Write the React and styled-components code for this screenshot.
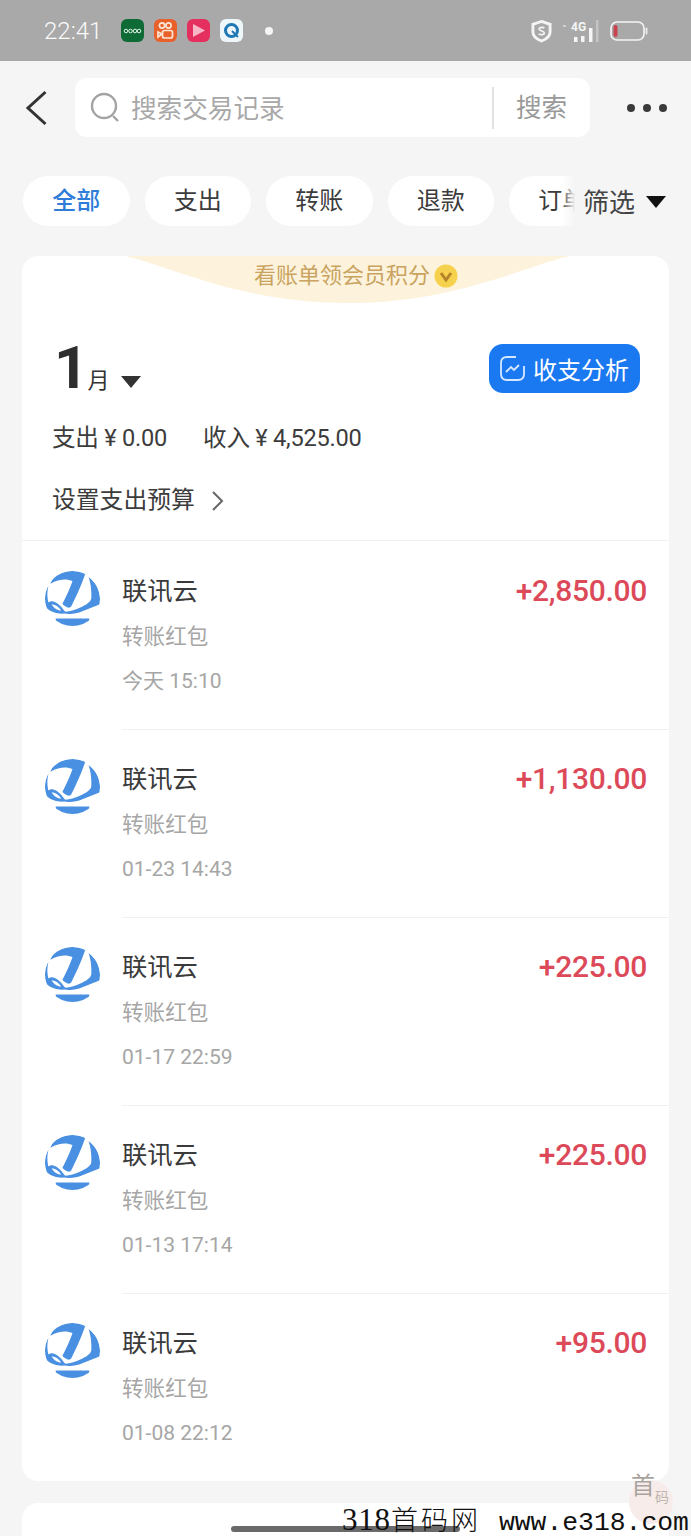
import React from 'react'
import styled, { createGlobalStyle } from 'styled-components'

const GlobalStyle = createGlobalStyle`
  html, body { margin: 0; padding: 0; background: #f5f5f5; }
  body { font-family: Roboto, "Noto Sans CJK SC", sans-serif; }
  * { box-sizing: border-box; }
`

const cjk = `Roboto, "Noto Sans CJK SC", sans-serif`

const Page = styled.div`
  position: relative;
  width: 691px;
  height: 1536px;
  overflow: hidden;
  background: #f5f5f5;
  font-family: ${cjk};
`

const StatusBar = styled.div`
  height: 61px;
  background: #a9a9a9;
  display: flex;
  align-items: center;
  padding: 0 43px 0 44px;
`

const Clock = styled.span`
  font-size: 24px;
  font-weight: 300;
  color: #fafafa;
  width: 77px;
`

const AppIcons = styled.div`
  display: flex;
  align-items: center;
  gap: 10px;
`

const AppIcon = styled.span`
  width: 23px;
  height: 23px;
  border-radius: 6px;
  background: ${p => p.$bg};
  display: flex;
  align-items: center;
  justify-content: center;
  flex: none;
`

const NotifyDot = styled.span`
  width: 8px;
  height: 8px;
  border-radius: 50%;
  background: #f5f5f5;
  margin-left: 22px;
`

const StatusRight = styled.div`
  margin-left: auto;
  display: flex;
  align-items: center;
  gap: 11px;
`

const TopRow = styled.div`
  height: 76px;
  margin-top: 17px;
  display: flex;
  align-items: flex-start;
  padding-left: 25px;
`

const BackBtn = styled.div`
  width: 50px;
  height: 59px;
  display: flex;
  align-items: center;
`

const SearchBox = styled.div`
  width: 515px;
  height: 59px;
  background: #fff;
  border-radius: 12px;
  display: flex;
  align-items: center;
  padding-left: 15px;
`

const Placeholder = styled.span`
  font-size: 25.6px;
  color: #a8a8a8;
  margin-left: 11px;
  padding-bottom: 2px;
  flex: 1;
`

const SearchBtn = styled.span`
  width: 98px;
  height: 42px;
  border-left: 2px solid #e2e2e2;
  font-size: 25.6px;
  line-height: 42px;
  color: #999;
  padding-left: 22px;
`

const MoreDots = styled.div`
  display: flex;
  gap: 8px;
  margin-left: 37px;
  height: 59px;
  align-items: center;
`

const Dot = styled.span`
  width: 8px;
  height: 8px;
  border-radius: 50%;
  background: #3a3a3a;
`

const FilterWrap = styled.div`
  position: relative;
  margin-top: 22px;
  height: 50px;
  overflow: hidden;
`

const Pills = styled.div`
  display: flex;
  gap: 15px;
  padding-left: 23px;
  width: 800px;
`

const Pill = styled.span`
  width: 106.5px;
  height: 50px;
  border-radius: 25px;
  background: #fff;
  text-align: center;
  line-height: 51px;
  font-size: 24px;
  color: ${p => (p.$active ? '#2f7dd8' : '#3c3c3c')};
  font-weight: ${p => (p.$active ? 500 : 400)};
`

const FilterOverlay = styled.div`
  position: absolute;
  top: 0;
  right: 0;
  width: 130px;
  height: 50px;
  background: linear-gradient(to right, rgba(245, 245, 245, 0), #f5f5f5 14px);
  display: flex;
  align-items: center;
  padding-left: 22px;
  font-size: 26px;
  color: #444;
`

const FilterLabel = styled.span`
  padding-bottom: 2px;
`

const Caret = styled.span`
  width: 0;
  height: 0;
  border-left: ${p => p.$w}px solid transparent;
  border-right: ${p => p.$w}px solid transparent;
  border-top: ${p => p.$h}px solid ${p => p.$color};
  margin-left: ${p => p.$ml}px;
  flex: none;
`

const FilterCaret = styled(Caret)`
  margin-top: 2px;
`

const Card = styled.div`
  margin: 30px 22px 0;
  background: #fff;
  border-radius: 16px;
`

const Banner = styled.div`
  position: relative;
  width: 445px;
  height: 47px;
  margin-left: 103px;
  display: flex;
  justify-content: center;
  padding: 3px 0 0 17px;
  font-size: 22px;
  line-height: 34px;
  color: #c9a35f;
  gap: 4px;
`

const BannerWave = styled.svg`
  position: absolute;
  inset: 0;
`

const BannerText = styled.span`
  position: relative;
`

const BannerBadge = styled.svg`
  position: relative;
  margin-top: 5px;
`

const Summary = styled.div`
  padding: 41px 29px 24px 30px;
  border-bottom: 1px solid #f0f0f0;
`

const MonthRow = styled.div`
  height: 49px;
  display: flex;
  align-items: center;
  justify-content: space-between;
`

const Month = styled.div`
  display: flex;
  align-items: baseline;
  color: #333;
  padding-left: 1px;
`

const MonthNum = styled.span`
  font-size: 60px;
  font-weight: 700;
  line-height: 49px;
  color: #2e2e2e;
  margin-left: 1px;
  letter-spacing: -4px;
`

const MonthUnit = styled.span`
  font-size: 22px;
  margin-left: 3px;
  margin-right: 12px;
`

const AnalysisBtn = styled.div`
  width: 151px;
  height: 49px;
  background: #1a78f0;
  border-radius: 14px;
  display: flex;
  align-items: center;
  padding-left: 10px;
  gap: 7px;
  font-size: 24px;
  color: #fff;
`

const Totals = styled.div`
  margin-top: 30px;
  display: flex;
  gap: 36px;
  font-size: 23.6px;
  line-height: 30px;
  color: #3c3c3c;
`

const Money = styled.span`
  letter-spacing: -0.25px;
`

const BudgetRow = styled.div`
  margin-top: 32px;
  display: flex;
  align-items: center;
  gap: 16px;
  font-size: 23.8px;
  line-height: 31px;
  color: #3c3c3c;
`

const RowList = styled.div`
  padding-top: 1px;
`

const Row = styled.div`
  display: grid;
  grid-template-columns: 100px 1fr;
`

const Avatar = styled.svg`
  margin: 29px 0 0 23px;
`

const RowBody = styled.div`
  padding: 33px 22px 33px 0;
  border-bottom: ${p => (p.$last ? 'none' : '1px solid #f0f0f0')};
`

const RowTop = styled.div`
  display: flex;
  justify-content: space-between;
  align-items: flex-start;
  height: 34px;
  line-height: 34px;
`

const Name = styled.span`
  font-size: 25.3px;
  color: #3a3a3a;
`

const Amount = styled.span`
  font-size: 30px;
  font-weight: 500;
  line-height: 32px;
  color: #dc4a59;
  letter-spacing: -0.3px;
`

const SubText = styled.div`
  margin-top: ${p => p.$mt}px;
  font-size: 21.6px;
  line-height: 30px;
  color: #a6a6a6;
`

const TimeText = styled(SubText)`
  font-size: 21px;
`

const NextCard = styled(Card)`
  margin-top: 22px;
  height: 200px;
`

const HomeBar = styled.div`
  position: absolute;
  left: 231px;
  top: 1526px;
  width: 229px;
  height: 6px;
  border-radius: 3px;
  background: #6a6a6a;
`

const Watermark = styled.div`
  position: absolute;
  left: 342px;
  top: 1504px;
  display: flex;
  align-items: baseline;
  color: #111;
  line-height: 30px;
  white-space: nowrap;
`

const MarkDigits = styled.span`
  font-family: "Liberation Serif", serif;
  font-size: 31px;
  letter-spacing: 0.8px;
`

const MarkCjk = styled.span`
  font-family: "Noto Sans CJK SC", sans-serif;
  font-weight: 300;
  font-size: 27px;
  letter-spacing: 3px;
`

const MarkUrl = styled.span`
  font-family: "Liberation Mono", monospace;
  font-size: 26.4px;
  margin-left: 18px;
`

const Seal = styled.svg`
  position: absolute;
  left: 627px;
  top: 1466px;
`

function LinkLogo() {
  return (
    <Avatar width="55" height="55" viewBox="8 6 164 164">
      <defs>
        <clipPath id="logoClip">
          <circle cx="90" cy="88" r="82" />
        </clipPath>
      </defs>
      <g clipPath="url(#logoClip)" fill="#4a90e2">
        <path d="M30 30 C50 5 100 0 128 14 C118 45 100 85 86 112 C80 120 66 112 60 104 C70 85 84 55 90 36 C72 28 50 30 24 44 Z" />
        <path d="M138 24 C165 45 175 75 172 105 L110 130 C90 136 70 136 60 128 C80 128 100 122 120 112 C134 104 144 98 146 88 C147 65 145 45 138 24 Z" />
        <path d="M18 50 C6 70 4 95 12 115 C25 130 50 136 72 132 C60 118 50 100 30 96 C24 96 20 98 18 100 C14 85 14 68 18 50 Z" />
        <path d="M40 148 H140 V175 H40 Z" />
      </g>
      <path d="M28 106 C40 106 50 114 56 124 C44 124 34 116 28 106 Z" fill="#fff" />
    </Avatar>
  )
}

const rows = [
  { amount: '+2,850.00', time: '今天 15:10' },
  { amount: '+1,130.00', time: '01-23 14:43' },
  { amount: '+225.00', time: '01-17 22:59' },
  { amount: '+225.00', time: '01-13 17:14' },
  { amount: '+95.00', time: '01-08 22:12' },
]

export default function App() {
  return (
    <Page>
      <GlobalStyle />
      <StatusBar>
        <Clock>22:41</Clock>
        <AppIcons>
          <AppIcon $bg="#0f6b35">
            <svg width="19" height="8" viewBox="0 0 19 8" fill="none" stroke="#dff2e5" strokeWidth="1">
              <circle cx="3" cy="4" r="1.8" />
              <circle cx="7.5" cy="4" r="1.8" />
              <circle cx="12" cy="4" r="1.8" />
              <circle cx="16" cy="4" r="1.8" />
            </svg>
          </AppIcon>
          <AppIcon $bg="#e8602a">
            <svg width="17" height="19" viewBox="0 0 17 19" fill="none" stroke="#fde6d6" strokeWidth="1.7">
              <circle cx="5" cy="4.5" r="2.6" />
              <circle cx="11.5" cy="4.5" r="2.6" />
              <rect x="5.5" y="9.5" width="10" height="7.5" rx="2" />
              <path d="M1 11 L5 13 L1 16 Z" />
            </svg>
          </AppIcon>
          <AppIcon $bg="#e5305f">
            <svg width="15" height="15" viewBox="0 0 15 15">
              <path d="M2 1 L14 7.5 L2 14 Z" fill="#f8b6c6" />
            </svg>
          </AppIcon>
          <AppIcon $bg="#eef6fa">
            <svg width="17" height="17" viewBox="0 0 17 17" fill="none">
              <circle cx="8.5" cy="8.5" r="6" stroke="#1f78b4" strokeWidth="3" />
              <path d="M9 9 L15 15" stroke="#1f78b4" strokeWidth="2" />
            </svg>
          </AppIcon>
        </AppIcons>
        <NotifyDot />
        <StatusRight>
          <svg width="21" height="24" viewBox="0 0 22 24" fill="none">
            <path d="M11 2 L20 5 V13 C20 18 15 21 11 22.5 C7 21 2 18 2 13 V5 Z" stroke="#f5f5f5" strokeWidth="3" />
            <path d="M14 9 C12.5 7.5 8.5 8 8.5 10 C8.5 12.5 14 11.5 14 14 C14 16 10 16.5 8 15" stroke="#f5f5f5" strokeWidth="1.8" />
          </svg>
          <svg width="36" height="26" viewBox="0 0 36 26" fill="#f5f5f5">
            <text x="8" y="13" fontSize="12" fontWeight="700" fontFamily="Roboto, sans-serif">4G</text>
            <rect x="0" y="7" width="3" height="2" opacity="0.5" />
            <rect x="11" y="19" width="3.5" height="5" />
            <rect x="18" y="18" width="3.5" height="6" />
            <rect x="26" y="10" width="3.5" height="14" />
            <rect x="33" y="2" width="2.5" height="22" opacity="0.35" />
          </svg>
          <svg width="38" height="20" viewBox="0 0 38 20" fill="none">
            <rect x="1" y="1" width="33" height="18" rx="6" stroke="#f5f5f5" strokeWidth="1.6" />
            <rect x="3.5" y="4" width="4" height="12" rx="2" fill="#c8434e" />
            <rect x="35.5" y="6.5" width="2" height="7" rx="1" fill="#e8e8e8" />
          </svg>
        </StatusRight>
      </StatusBar>

      <TopRow>
        <BackBtn>
          <svg width="24" height="36" viewBox="0 0 24 36" fill="none">
            <path d="M20.5 2 L3 18 L20.5 34" stroke="#333" strokeWidth="3" />
          </svg>
        </BackBtn>
        <SearchBox>
          <svg width="30" height="31" viewBox="0 0 30 31" fill="none" stroke="#a3a3a3" strokeWidth="2.4">
            <circle cx="14" cy="14" r="12" />
            <path d="M23 24 L28 29" />
          </svg>
          <Placeholder>搜索交易记录</Placeholder>
          <SearchBtn>搜索</SearchBtn>
        </SearchBox>
        <MoreDots>
          <Dot />
          <Dot />
          <Dot />
        </MoreDots>
      </TopRow>

      <FilterWrap>
        <Pills>
          <Pill $active>全部</Pill>
          <Pill>支出</Pill>
          <Pill>转账</Pill>
          <Pill>退款</Pill>
          <Pill>订单</Pill>
        </Pills>
        <FilterOverlay>
          <FilterLabel>筛选</FilterLabel>
          <FilterCaret $w={10} $h={12} $color="#111" $ml={11} />
        </FilterOverlay>
      </FilterWrap>

      <Card>
        <Banner>
          <BannerWave width="445" height="47" viewBox="0 0 445 47">
            <path d="M0 0 H445 C400 10 330 47 222 47 C115 47 45 10 0 0 Z" fill="#fdf3dc" />
          </BannerWave>
          <BannerText>看账单领会员积分</BannerText>
          <BannerBadge width="24" height="24" viewBox="0 0 24 24" fill="none">
            <circle cx="12" cy="12" r="11.5" fill="#f6d14e" />
            <path d="M7 9 L12 16 L17 9" stroke="#b5832a" strokeWidth="3" />
          </BannerBadge>
        </Banner>

        <Summary>
          <MonthRow>
            <Month>
              <MonthNum>1</MonthNum>
              <MonthUnit>月</MonthUnit>
              <Caret $w={10} $h={12} $color="#333" $ml={0} />
            </Month>
            <AnalysisBtn>
              <svg width="27" height="27" viewBox="0 0 27 27" fill="none" stroke="#d6e8ff" strokeWidth="1.8">
                <path d="M17 2 H8 C4 2 2 4 2 8 V19 C2 23 4 25 8 25 H19 C23 25 25 23 25 19 V11" />
                <path d="M7 17 L12 12 L15 15 L20 10" />
              </svg>
              收支分析
            </AnalysisBtn>
          </MonthRow>
          <Totals>
            <Money>支出 ¥ 0.00</Money>
            <Money>收入 ¥ 4,525.00</Money>
          </Totals>
          <BudgetRow>
            设置支出预算
            <svg width="13" height="22" viewBox="0 0 13 22" fill="none">
              <path d="M2 2 L11 11 L2 20" stroke="#666" strokeWidth="2" />
            </svg>
          </BudgetRow>
        </Summary>

        <RowList>
          {rows.map((r, i) => (
            <Row key={i}>
              <LinkLogo />
              <RowBody $last={i === rows.length - 1}>
                <RowTop>
                  <Name>联讯云</Name>
                  <Amount>{r.amount}</Amount>
                </RowTop>
                <SubText $mt={13}>转账红包</SubText>
                <TimeText $mt={14}>{r.time}</TimeText>
              </RowBody>
            </Row>
          ))}
        </RowList>
      </Card>

      <NextCard />

      <HomeBar />
      <Seal width="48" height="62" viewBox="0 0 48 62">
        <circle cx="24" cy="36" r="22" fill="#f7ece9" />
        <text x="4" y="28" fontSize="24" fill="#aaa49e" fontFamily="Noto Sans CJK SC, sans-serif">首</text>
        <text x="28" y="36" fontSize="14" fill="#c0b6b0" fontFamily="Noto Sans CJK SC, sans-serif">码</text>
      </Seal>
      <Watermark>
        <MarkDigits>318</MarkDigits>
        <MarkCjk>首码网</MarkCjk>
        <MarkUrl>www.e318.com</MarkUrl>
      </Watermark>
    </Page>
  )
}
